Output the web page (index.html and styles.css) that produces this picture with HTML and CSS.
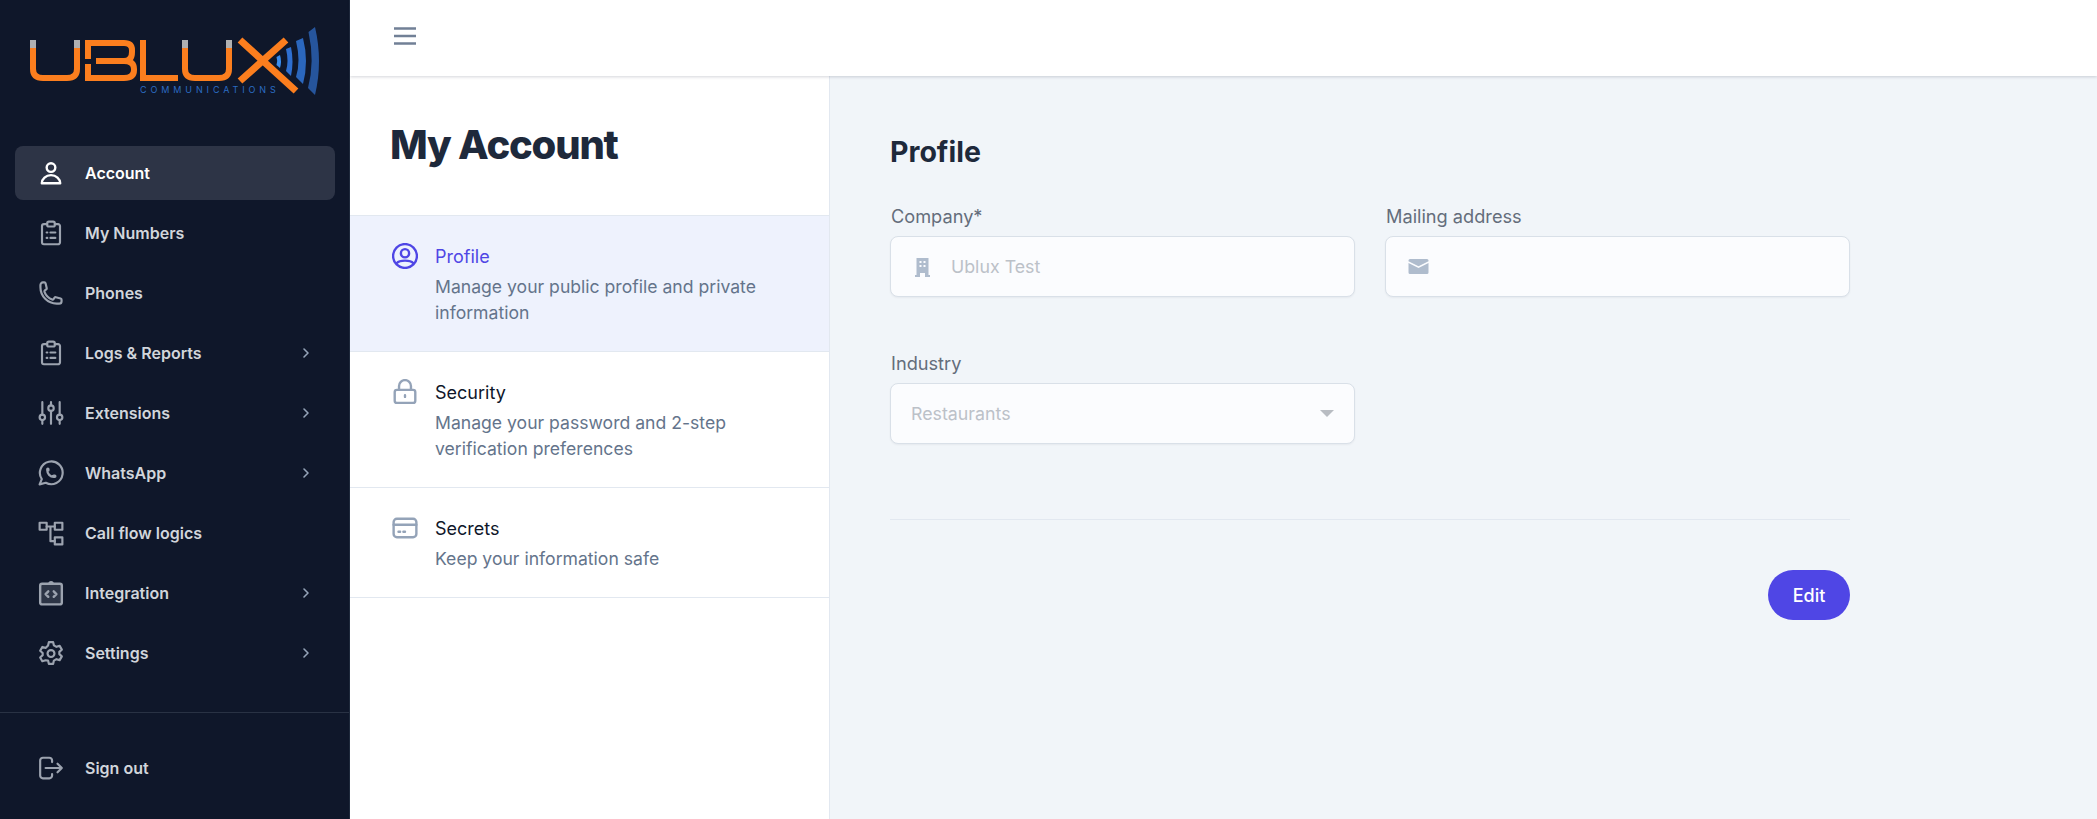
FILE: index.html
```html
<!DOCTYPE html>
<html lang="en">
<head>
<meta charset="utf-8">
<title>My Account</title>
<link rel="stylesheet" href="styles.css">
</head>
<body>
<div class="app">
  <aside class="sidebar">
    <div class="logo">
      <svg class="logo-svg" viewBox="0 0 349 146" role="img" aria-label="Ublux Communications">
        <g fill="none" stroke="#fb7e1e" stroke-width="6">
          <path d="M33 48V69Q33 78 43 78H67Q77 78 77 69V48"/>
          <path d="M88 59V43H124Q132 43 132 50V52Q132 61 124 61H96"/>
          <path d="M88 64V78H124Q134 78 134 70V69Q134 61 124 61"/>
          <path d="M143 40V78H178"/>
          <path d="M185 48V69Q185 78 195 78H219Q229 78 229 69V48"/>
          <path stroke-width="7" d="M240 40L296 91M286 40L240 81"/>
        </g>
        <g fill="#b0b0b0">
          <rect x="30" y="40" width="6" height="8"/>
          <rect x="74" y="40" width="6" height="8"/>
          <rect x="182" y="40" width="6" height="8"/>
          <rect x="226" y="40" width="6" height="8"/>
        </g>
        <path fill="#3a8dee" d="M276.500 57L280 55Q282 61.500 280 68L276.500 65Q278 61.500 276.500 57z"/>
        <path fill="#2e6fd0" d="M286 49L291 47Q294 61.500 291 76L286 71Q289 61.500 286 49z"/>
        <path fill="#2b67bd" d="M296 41L303 38Q309 61.500 303 84L296 77Q301 61.500 296 41z"/>
        <path fill="#26559c" d="M308.500 32L315 27Q323 61.500 315 95L308 88Q315 61.500 308.500 32z"/>
        <text class="logo-sub" x="140" y="92.500">COMMUNICATIONS</text>
      </svg>
    </div>
    <nav class="nav">
      <a class="nav-item active"><svg class="nav-icon" viewBox="0 0 24 24"><circle cx="12" cy="7" r="4"/><path d="M3.500 21.500a8.500 7.500 0 0 1 17 0z"/></svg><span class="nav-label">Account</span></a>
      <a class="nav-item"><svg class="nav-icon" viewBox="0 0 24 24"><path d="M8.500 3.800H5.500A1.800 1.800 0 0 0 3.700 5.600v15a1.800 1.800 0 0 0 1.800 1.800h13a1.800 1.800 0 0 0 1.800-1.800v-15a1.800 1.800 0 0 0-1.800-1.800h-3"/><rect x="8.500" y="1.500" width="7" height="4.500" rx="1.500"/><path d="M8 11.500h.6M11.500 11.500h4.500M8 16.500h.6M11.500 16.500h4.500"/></svg><span class="nav-label">My Numbers</span></a>
      <a class="nav-item"><svg class="nav-icon" viewBox="0 0 24 24"><path d="M2.250 6.750c0 8.284 6.716 15 15 15h2.250a2.250 2.250 0 002.250-2.250v-1.372c0-.516-.351-.966-.852-1.091l-4.423-1.106c-.44-.11-.902.055-1.173.417l-.97 1.293c-.282.376-.769.542-1.210.38a12.035 12.035 0 01-7.143-7.143c-.162-.441.004-.928.38-1.210l1.293-.97c.363-.271.527-.734.417-1.173L6.963 3.102a1.125 1.125 0 00-1.091-.852H4.500A2.250 2.250 0 002.250 4.500v2.250z"/></svg><span class="nav-label">Phones</span></a>
      <a class="nav-item"><svg class="nav-icon" viewBox="0 0 24 24"><path d="M8.500 3.800H5.500A1.800 1.800 0 0 0 3.700 5.600v15a1.800 1.800 0 0 0 1.800 1.800h13a1.800 1.800 0 0 0 1.800-1.800v-15a1.800 1.800 0 0 0-1.800-1.800h-3"/><rect x="8.500" y="1.500" width="7" height="4.500" rx="1.500"/><path d="M8 11.500h.6M11.500 11.500h4.500M8 16.500h.6M11.500 16.500h4.500"/></svg><span class="nav-label">Logs &amp; Reports</span><svg class="chev" viewBox="0 0 8 12"><path d="M2 2l4 4-4 4"/></svg></a>
      <a class="nav-item"><svg class="nav-icon" viewBox="0 0 24 24"><path d="M4 2v11.500M4 18.500V22M12 2v3M12 10v12M20 2v11.500M20 18.500V22"/><circle cx="4" cy="16" r="2.500"/><circle cx="12" cy="7.500" r="2.500"/><circle cx="20" cy="16" r="2.500"/></svg><span class="nav-label">Extensions</span><svg class="chev" viewBox="0 0 8 12"><path d="M2 2l4 4-4 4"/></svg></a>
      <a class="nav-item"><svg class="nav-icon" viewBox="0 0 24 24"><path d="M1.500 22.500l2-4.900a10.500 10.500 0 1 1 3.700 3.400z"/><path d="M8.500 9.500a.6.6 0 0 0 1.200 0v-1a.6.6 0 0 0-1.200 0v1a6 6 0 0 0 6 6h1a.6.6 0 0 0 0-1.200h-1a.6.6 0 0 0 0 1.200"/></svg><span class="nav-label">WhatsApp</span><svg class="chev" viewBox="0 0 8 12"><path d="M2 2l4 4-4 4"/></svg></a>
      <a class="nav-item"><svg class="nav-icon" viewBox="0 0 24 24"><rect x="1.500" y="2.500" width="6.500" height="6.500"/><rect x="15.500" y="2.500" width="7" height="6.500"/><rect x="15.500" y="16" width="7" height="6.500"/><path d="M8 6h7.500M11.500 6v13.500h4"/></svg><span class="nav-label">Call flow logics</span></a>
      <a class="nav-item"><svg class="nav-icon integ" viewBox="0 0 24 24"><rect x="2" y="3.500" width="20" height="19" rx="1.800"/><path d="M10.500 3.500a1.500 1.500 0 0 1 3 0"/><path d="M9.500 10.500L7 13l2.500 2.500M14.500 10.500L17 13l-2.500 2.500"/></svg><span class="nav-label">Integration</span><svg class="chev" viewBox="0 0 8 12"><path d="M2 2l4 4-4 4"/></svg></a>
      <a class="nav-item"><svg class="nav-icon" viewBox="0 0 24 24"><path d="M10 2h4l.7 3 2.300 1.300 3-.9 2 3.500-2.300 2.100v2l2.300 2.100-2 3.500-3-.9-2.300 1.300-.7 3h-4l-.7-3L7 18.700l-3 .9-2-3.500L4.300 14v-2L2 9.900l2-3.500 3 .9L9.300 5z"/><circle cx="12" cy="12.500" r="3.200"/></svg><span class="nav-label">Settings</span><svg class="chev" viewBox="0 0 8 12"><path d="M2 2l4 4-4 4"/></svg></a>
    </nav>
    <div class="side-foot">
      <a class="nav-item"><svg class="nav-icon" viewBox="0 0 24 24"><path d="M13 6.500V5a2.500 2.500 0 0 0-2.500-2.500H4.500A2.500 2.500 0 0 0 2 5v14a2.500 2.500 0 0 0 2.500 2.500h6A2.500 2.500 0 0 0 13 19v-1.500"/><path d="M7 12h15M18 8l4 4-4 4"/></svg><span class="nav-label">Sign out</span></a>
    </div>
  </aside>
  <div class="main">
    <header class="topbar">
      <svg class="burger" viewBox="0 0 22 18"><path d="M0 1.500h22M0 9h22M0 16.500h22"/></svg>
    </header>
    <div class="body">
      <section class="panel">
        <h1 class="panel-title">My Account</h1>
        <a class="tab selected">
          <svg class="tab-icon" viewBox="0 0 24 24"><circle cx="12" cy="12" r="11"/><circle cx="12" cy="9.500" r="3.800"/><path d="M4.500 18.500C7 15.500 17 15.500 19.500 18.500"/></svg>
          <div class="tab-text"><div class="tab-name">Profile</div><div class="tab-desc">Manage your public profile and private information</div></div>
        </a>
        <a class="tab">
          <svg class="tab-icon" viewBox="0 0 24 24"><rect x="2.500" y="10" width="19" height="12" rx="2"/><path d="M6.500 10V6.500a5.500 5.500 0 0 1 11 0V10M12 15v1.500"/></svg>
          <div class="tab-text"><div class="tab-name">Security</div><div class="tab-desc">Manage your password and 2-step verification preferences</div></div>
        </a>
        <a class="tab">
          <svg class="tab-icon" viewBox="0 0 24 24"><rect x="1.500" y="3.500" width="21" height="17" rx="3"/><path d="M1.500 9h21M6 15.500h1.500M10.500 15.500H12"/></svg>
          <div class="tab-text"><div class="tab-name">Secrets</div><div class="tab-desc">Keep your information safe</div></div>
        </a>
      </section>
      <section class="content">
        <h2 class="content-title">Profile</h2>
        <div class="form">
          <div class="field">
            <label class="field-label">Company*</label>
            <div class="input with-icon">
              <svg class="input-icon" viewBox="0 0 16 20"><path fill-rule="evenodd" d="M2 1h12v17h1.500v2h-5v-4h-5v4H.5v-2H2zM5 4v2h2V4zm4 0v2h2V4zM5 8v2h2V8zm4 0v2h2V8z"/></svg>
              <span class="input-val">Ublux Test</span>
            </div>
          </div>
          <div class="field">
            <label class="field-label">Mailing address</label>
            <div class="input with-icon">
              <svg class="input-icon mail" viewBox="0 0 20 15"><path d="M1.500 0h17A1.500 1.500 0 0 1 20 1.500v.7l-10 5-10-5v-.7A1.500 1.500 0 0 1 1.500 0z"/><path d="M0 4l10 5 10-5v9.500a1.500 1.500 0 0 1-1.500 1.500h-17A1.500 1.500 0 0 1 0 13.500z"/></svg>
            </div>
          </div>
          <div class="field">
            <label class="field-label">Industry</label>
            <div class="input select">
              <span class="input-val">Restaurants</span>
              <span class="caret"></span>
            </div>
          </div>
        </div>
        <hr class="divider">
        <div class="actions"><button class="btn">Edit</button></div>
      </section>
    </div>
  </div>
</div>
</body>
</html>
```

FILE: styles.css
```css
* { box-sizing: border-box; }
html, body { margin: 0; height: 100%; }
body { font-family: Inter, "Liberation Sans", sans-serif; overflow: hidden; background: #f1f5f9; }
.app { display: flex; height: 819px; }

.sidebar { width: 350px; flex: none; background: #0f172a; border-right: 1px solid #1e293b; display: flex; flex-direction: column; }
.logo { height: 146px; flex: none; }
.logo-svg { display: block; width: 349px; height: 146px; }
.logo-sub { font-family: Inter, sans-serif; font-size: 9px; letter-spacing: 3.900px; fill: #2b6cc4; }
.nav { display: flex; flex-direction: column; gap: 6px; padding: 0 14px 0 15px; }
.nav-item { height: 54px; display: flex; align-items: center; padding: 0 23px; border-radius: 8px; color: #d1d5db; }
.nav-item.active { background: #2d3446; color: #fff; }
.nav-icon { width: 26px; height: 26px; flex: none; margin-bottom: 1px; fill: none; stroke: #9ca3af; stroke-width: 2; stroke-linecap: round; stroke-linejoin: round; }
.nav-icon.integ { fill: rgba(156, 163, 175, .22); stroke-width: 2.200; }
.nav-item.active .nav-icon { stroke: #fff; stroke-width: 2.200; }
.nav-label { flex: 1; margin-left: 21px; padding-bottom: 1px; font-size: 16px; font-weight: 600; }
.chev { width: 8px; height: 12px; flex: none; margin-right: 2px; fill: none; stroke: #94a3b8; stroke-width: 1.600; stroke-linecap: round; stroke-linejoin: round; }
.side-foot { margin-top: 32px; border-top: 1px solid #293244; padding: 28px 15px 0; }

.main { flex: 1; min-width: 0; display: flex; flex-direction: column; }
.topbar { height: 76px; flex: none; background: #fff; box-shadow: 0 1px 3px rgba(15, 23, 42, .18); display: flex; align-items: center; padding: 0 0 4px 44px; position: relative; }
.burger { width: 22px; height: 18px; fill: none; stroke: #718096; stroke-width: 2.500; }
.body { flex: 1; display: flex; min-height: 0; }

.panel { width: 480px; flex: none; background: #fff; border-right: 1px solid #e2e8f0; }
.panel-title { margin: 0; height: 140px; display: flex; align-items: center; padding: 0 0 2px 40px; font-size: 40px; font-weight: 800; letter-spacing: -1.200px; color: #1e293b; border-bottom: 1px solid #e2e8f0; }
.tab { display: flex; padding: 27px 40px 25px 40px; border-bottom: 1px solid #e2e8f0; }
.tab.selected { background: #eef2fd; }
.tab-icon { width: 26px; height: 26px; flex: none; margin: 0 17px 0 2px; fill: none; stroke: #94a3b8; stroke-width: 2.200; stroke-linecap: round; stroke-linejoin: round; }
.tab.selected .tab-icon { stroke: #4f46e5; }
.tab-name { font-size: 18px; line-height: 27px; color: #0f172a; }
.tab.selected .tab-name { color: #4f46e5; }
.tab-desc { margin-top: 4px; font-size: 17.600px; line-height: 26px; color: #64748b; }

.content { flex: 1; padding: 0 247px 0 60px; }
.content-title { margin: 56px 0 0; font-size: 28.500px; line-height: 40px; font-weight: 700; color: #1e293b; }
.form { display: grid; grid-template-columns: 1fr 1fr; column-gap: 30px; row-gap: 54px; margin-top: 32px; }
.field-label { display: block; padding-left: 1px; font-size: 18.200px; line-height: 24px; color: #646d7b; margin-bottom: 8px; }
.input { height: 61px; background: #fbfcfe; border: 1px solid #d9e0e8; border-radius: 8px; box-shadow: 0 1px 2px rgba(15, 23, 42, .05); display: flex; align-items: center; font-size: 17.800px; color: #bcc1c8; }
.with-icon { padding-left: 23px; }
.select { padding: 0 20px 0 20px; justify-content: space-between; }
.input-icon { width: 17px; height: 20px; flex: none; fill: #afbccd; margin-right: 20px; }
.input-icon.mail { width: 21px; height: 15px; margin-left: -1px; }
.caret { width: 0; height: 0; border-left: 7px solid transparent; border-right: 7px solid transparent; border-top: 7px solid #b8bcc2; }
.divider { border: 0; border-top: 1px solid #e2e8f0; margin: 75px 0 0; }
.actions { display: flex; justify-content: flex-end; margin-top: 50px; }
.btn { width: 82px; height: 50px; border: 0; border-radius: 25px; background: #4f46e5; color: #fff; font: 500 18px Inter, sans-serif; }
```
